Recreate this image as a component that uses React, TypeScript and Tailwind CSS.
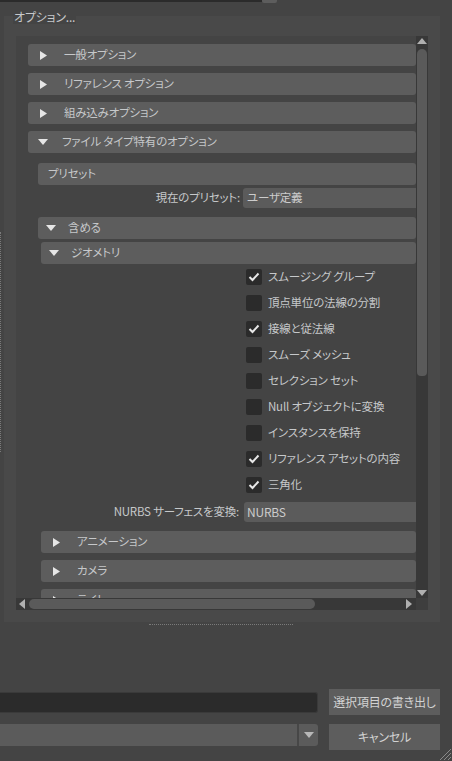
import React from 'react'

const font = "[font-family:'Noto_Sans_CJK_JP','Noto_Sans',sans-serif] [font-feature-settings:'palt'] tracking-[-0.2px]"

function TriRight() {
  return (
    <svg width="7" height="9" viewBox="0 0 7 9" className="shrink-0">
      <path d="M0 0 L7 4.5 L0 9 Z" fill="#e6e6e6" />
    </svg>
  )
}

function TriDown() {
  return (
    <svg width="10" height="6" viewBox="0 0 10 6" className="shrink-0">
      <path d="M0 0 L10 0 L5 6 Z" fill="#e6e6e6" />
    </svg>
  )
}

function Header({ label, open, tri = 'pl-3', gap = 'gap-[17px]' }: { label: string; open?: boolean; tri?: string; gap?: string }) {
  return (
    <div className={`flex h-[22px] items-center ${gap} rounded-[3px] bg-[#5d5d5d] ${tri} text-[11.5px] text-[#c6c8ca]`}>
      {open ? <TriDown /> : <TriRight />}
      <span>{label}</span>
    </div>
  )
}

function Check({ label, checked }: { label: string; checked?: boolean }) {
  return (
    <div className="flex h-[26px] items-center gap-[6px] pl-[205px]">
      <div className="flex h-4 w-4 items-center justify-center rounded-[2px] bg-[#2b2b2b]">
        {checked && (
          <svg width="12" height="10" viewBox="0 0 12 10">
            <path d="M1.5 5 L4.5 8 L10.5 1.5" fill="none" stroke="#e8e8e8" strokeWidth="2" />
          </svg>
        )}
      </div>
      <span className="text-[11.5px] text-[#c6c8ca]">{label}</span>
    </div>
  )
}

export default function App() {
  return (
    <div className={`relative h-[761px] w-[452px] overflow-hidden bg-[#444444] ${font}`}>
      {/* top strip */}
      <div className="flex h-[3px]">
        <div className="h-[2px] w-[262px] bg-[#2b2b2b]" />
        <div className="h-[3px] w-[15px] rounded-b-[2px] bg-[#5d5d5d]" />
      </div>

      {/* splitter dots left */}
      <div className="absolute left-0 top-[232px] h-[220px] border-l border-dotted border-[#7a7a7a]" />

      {/* options frame */}
      <div className="relative ml-[4px] mt-[13px] w-[436px] bg-[#494949] px-[12px] pb-[12px] pt-[20px]">
        <div className="absolute left-[9px] top-[-6px] bg-[#444444] px-[1px] text-[12px] leading-[14px] text-[#c6c8ca]">オプション...</div>

        <div className="flex h-[574px] w-[412px] flex-col bg-[#444444]">
          <div className="flex min-h-0 flex-1">
            {/* content */}
            <div className="min-w-0 flex-1 overflow-hidden pl-[12px] pt-[8px]">
              <div className="flex flex-col gap-[7px]">
                <Header label="一般オプション" tri="pl-[12px]" gap="gap-[17px]" />
                <Header label="リファレンス オプション" tri="pl-[12px]" gap="gap-[17px]" />
                <Header label="組み込みオプション" tri="pl-[12px]" gap="gap-[17px]" />
                <Header label="ファイル タイプ特有のオプション" open tri="pl-[10px]" gap="gap-[14px]" />
              </div>

              <div className="ml-[10px] mt-[10px] flex h-[22px] items-center rounded-[3px] bg-[#5d5d5d] pl-[10px] text-[11.5px] text-[#c6c8ca]">
                プリセット
              </div>

              <div className="ml-[10px] mt-[3px] flex h-[20px] items-center">
                <div className="w-[205px] pr-[3px] text-right text-[11.5px] text-[#c6c8ca]">現在のプリセット:</div>
                <div className="flex h-[20px] flex-1 items-center rounded-l-[3px] bg-[#5b5b5b] pl-[4px] text-[11.5px] text-[#cccccc]">ユーザ定義</div>
              </div>

              <div className="ml-[10px] mt-[9px]">
                <Header label="含める" open tri="pl-[8px]" gap="gap-[12px]" />
              </div>
              <div className="ml-[13px] mt-[3px]">
                <Header label="ジオメトリ" open tri="pl-[8px]" gap="gap-[12px]" />
              </div>

              <div className="ml-[13px] flex flex-col">
                <Check label="スムージング グループ" checked />
                <Check label="頂点単位の法線の分割" />
                <Check label="接線と従法線" checked />
                <Check label="スムーズ メッシュ" />
                <Check label="セレクション セット" />
                <Check label="Null オブジェクトに変換" />
                <Check label="インスタンスを保持" />
                <Check label="リファレンス アセットの内容" checked />
                <Check label="三角化" checked />
              </div>

              <div className="ml-[13px] mt-[4px] flex h-[20px] items-center">
                <div className="w-[203px] pr-[5px] text-right text-[11.5px] text-[#c6c8ca]">NURBS サーフェスを変換:</div>
                <div className="flex h-[20px] flex-1 items-center rounded-l-[3px] bg-[#5b5b5b] pl-[3px] text-[12px] text-[#cccccc]">NURBS</div>
              </div>

              <div className="ml-[13px] mt-[9px] flex flex-col gap-[7px]">
                <Header label="アニメーション" tri="pl-[12px]" gap="gap-[17px]" />
                <Header label="カメラ" tri="pl-[12px]" gap="gap-[17px]" />
                <Header label="ライト" tri="pl-[12px]" gap="gap-[17px]" />
              </div>
            </div>

            {/* vertical scrollbar */}
            <div className="flex w-[12px] flex-col items-center bg-[#383838]">
              <svg width="10" height="6" viewBox="0 0 10 6" className="mt-[2px]">
                <path d="M0 6 L10 6 L5 0 Z" fill="#b0b0b0" />
              </svg>
              <div className="mt-[5px] h-[327px] w-[10px] rounded-t-[5px] rounded-b-[4px] bg-[#5a5a5a]" />
              <div className="flex-1" />
              <svg width="10" height="6" viewBox="0 0 10 6" className="mb-[2px]">
                <path d="M0 0 L10 0 L5 6 Z" fill="#b0b0b0" />
              </svg>
            </div>
          </div>

          {/* horizontal scrollbar */}
          <div className="flex h-[12px]">
            <div className="flex flex-1 items-center bg-[#383838]">
              <svg width="6" height="10" viewBox="0 0 6 10" className="ml-[3px]">
                <path d="M6 0 L6 10 L0 5 Z" fill="#b0b0b0" />
              </svg>
              <div className="ml-[4px] h-[10px] w-[286px] rounded-[5px] bg-[#5a5a5a]" />
              <div className="flex-1" />
              <svg width="6" height="10" viewBox="0 0 6 10" className="mr-[4px]">
                <path d="M0 0 L0 10 L6 5 Z" fill="#b0b0b0" />
              </svg>
            </div>
            <div className="w-[12px] bg-[#3e3e3e]" />
          </div>
        </div>
      </div>

      {/* splitter dots bottom */}
      <div className="ml-[149px] mt-[2px] w-[144px] border-t border-dotted border-[#7a7a7a]" />

      {/* bottom controls */}
      <div className="mt-[64px] flex flex-col gap-[9px]">
        <div className="flex items-center">
          <div className="h-[21px] w-[318px] rounded-r-[3px] border border-l-0 border-[#3a3a3a] bg-[#2b2b2b]" />
          <button className="ml-[11px] h-[26px] w-[111px] bg-[#5d5d5d] text-[12px] text-[#d2d2d2]">選択項目の書き出し</button>
        </div>
        <div className="flex items-start">
          <div className="flex h-[22px] w-[318px]">
            <div className="flex-1 bg-[#5b5b5b]" />
            <div className="w-[2px] bg-[#474747]" />
            <div className="flex w-[19px] items-center justify-center rounded-r-[3px] bg-[#5b5b5b]">
              <svg width="10" height="6" viewBox="0 0 10 6">
                <path d="M0 0 L10 0 L5 6 Z" fill="#b8b8b8" />
              </svg>
            </div>
          </div>
          <button className="ml-[11px] h-[26px] w-[111px] bg-[#5d5d5d] text-[12px] text-[#d2d2d2]">キャンセル</button>
        </div>
      </div>

      {/* resize grip */}
      <svg width="14" height="14" viewBox="0 0 14 14" className="absolute bottom-0 right-0">
        <path d="M13 2 L2 13 M13 6 L6 13 M13 10 L10 13" stroke="#8a8a8a" strokeWidth="1" />
      </svg>
    </div>
  )
}
